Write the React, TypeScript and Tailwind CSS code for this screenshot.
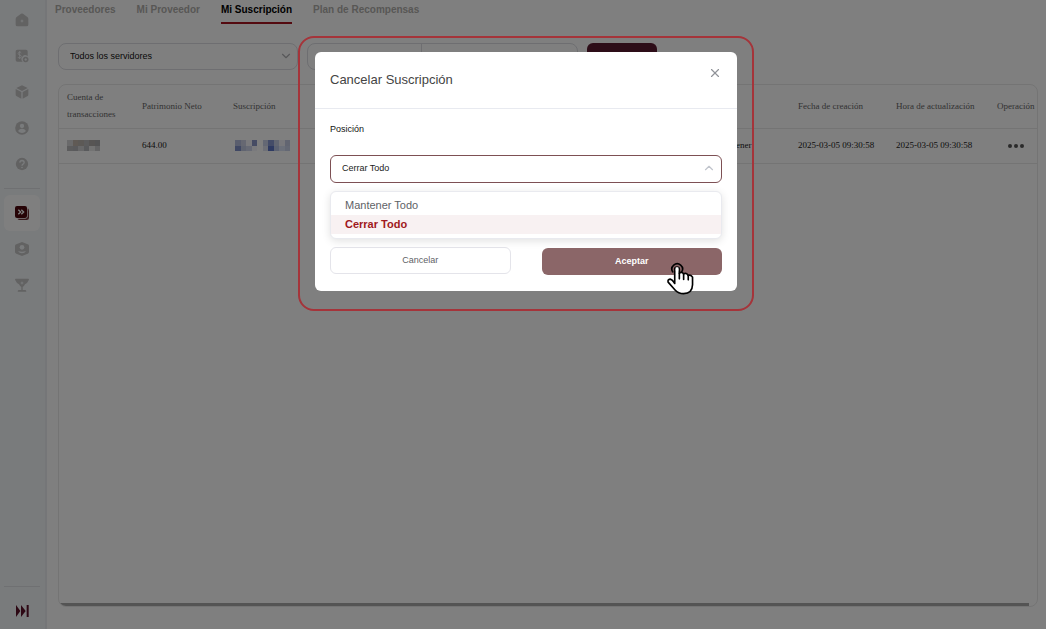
import { useState, type ReactNode } from "react";
import { X, ChevronDown, ChevronUp } from "lucide-react";

const SANS = "font-['Liberation_Sans',Arial,sans-serif]";
const SERIF = "font-['Liberation_Serif','Times_New_Roman',serif]";

function Icon({ children }: { children: ReactNode }) {
  return (
    <svg viewBox="0 0 42 42" className="size-3.5" fill="currentColor" aria-hidden="true">
      {children}
    </svg>
  );
}

const mainLinks = [
  {
    label: "Inicio",
    icon: (
      <Icon>
        <path d="M18 2.500Q21 0 24 2.500L37 12Q40 14 40 18V35Q40 40 35 40H7Q2 40 2 35V18Q2 14 5 12ZM21 18L19.500 22.500L15 24L19.500 25.500L21 30L22.500 25.500L27 24L22.500 22.500Z" fillRule="evenodd" />
      </Icon>
    ),
  },
  {
    label: "Cuentas",
    icon: (
      <Icon>
        <path d="M7 2H33Q38 2 38 7V22A10 10 0 0 0 23 38H7Q2 38 2 33V7Q2 2 7 2Z" />
        <path d="M19 12Q17 9 13.500 9.500Q9 10 9.500 14Q10 17 14 18Q19 19 19 22.500Q18.500 27 14 27Q10 27 8.500 24M14 6V30" fill="none" stroke="#f3f6f9" strokeWidth="2.500" />
        <path fillRule="evenodd" d="M32 23A8.500 8.500 0 1 1 31.900 23ZM32 28A3.500 3.500 0 1 0 32.100 28Z" />
      </Icon>
    ),
  },
  {
    label: "Productos",
    icon: (
      <Icon>
        <path d="M21 1L38 9L21 18L4 9Z" />
        <path d="M2 12L19 21V41L4 33Q2 32 2 29Z" />
        <path d="M40 12L23 21V41L38 33Q40 32 40 29Z" />
      </Icon>
    ),
  },
  {
    label: "Perfil",
    icon: (
      <Icon>
        <circle cx="21" cy="21" r="20.500" />
        <circle cx="21" cy="15" r="6.500" fill="#f3f6f9" />
        <path d="M9 30Q13 23 21 23Q29 23 33 30Q28 36 21 36Q14 36 9 30Z" fill="#f3f6f9" />
      </Icon>
    ),
  },
  {
    label: "Ayuda",
    icon: (
      <Icon>
        <circle cx="21" cy="21" r="18.500" />
        <path d="M14.500 17Q15 10.500 21 10.500Q27.500 11 27.500 16.500Q27 19.500 24 21.500Q21 23 21 26.500" fill="none" stroke="#f3f6f9" strokeWidth="4" />
        <circle cx="21" cy="31.500" r="2.500" fill="#f3f6f9" />
      </Icon>
    ),
  },
];

const tabs = ["Proveedores", "Mi Proveedor", "Mi Suscripción", "Plan de Recompensas"];
const positions = ["Mantener Todo", "Cerrar Todo"];

function Mosaic({ colors, label }: { colors: string[]; label: string }) {
  const cols = colors.length / 2;
  return (
    <svg
      role="img"
      aria-label={label}
      viewBox={`0 0 ${cols} 2`}
      height="11"
      width={cols * 5.5}
      shapeRendering="crispEdges"
      className="block"
    >
      {colors.map((c, i) => (
        <rect key={i} x={i % cols} y={Math.floor(i / cols)} width="1" height="1" fill={c} />
      ))}
    </svg>
  );
}

function Sidebar() {
  const item = "flex h-9 w-full items-center justify-center text-[#c4c4c4]";
  return (
    <nav className="flex w-[47px] shrink-0 flex-col border-r-2 border-[#ebedf0] bg-[#f3f6f9] pt-0.5 pr-px">
      {mainLinks.map((l) => (
        <a key={l.label} href="#" aria-label={l.label} className={item}>
          {l.icon}
        </a>
      ))}
      <div className="mx-1 my-1.5 h-px shrink-0 bg-[#dfe1e4]" />
      <a
        href="#"
        aria-label="Suscripciones"
        aria-current="page"
        className="mx-1 flex h-9 items-center justify-center rounded-md bg-white"
      >
        <svg viewBox="0 0 42 42" className="size-3.5" aria-hidden="true">
          <rect x="7" y="7" width="35" height="35" rx="7" fill="#6e3036" />
          <rect x="0" y="0" width="38" height="38" rx="7" fill="#fff" />
          <rect x="0" y="0" width="36" height="36" rx="6" fill="#4c060c" />
          <path d="M10 11L17 18L10 25M19 11L26 18L19 25" fill="none" stroke="#fff" strokeWidth="4" />
        </svg>
      </a>
      <a href="#" aria-label="Seguridad" className={item}>
        <Icon>
          <path d="M21 0L38 7Q42 8 42 12V30Q42 33 38 35L21 42L4 35Q0 33 0 30V12Q0 8 4 7Z" />
          <circle cx="21" cy="16" r="7" fill="#f3f6f9" />
          <path d="M9 27Q21 31 33 27Q29 34 21 34Q13 34 9 27Z" fill="#f3f6f9" />
        </Icon>
      </a>
      <a href="#" aria-label="Recompensas" className={item}>
        <Icon>
          <path fillRule="evenodd" d="M2 2H40Q43 3 41 7Q38 15 30 19Q27 25 23 27V36H31Q34 36 34 41H8Q8 36 11 36H19V27Q15 25 12 19Q4 15 1 7Q-1 3 2 2ZM21 9L19.500 13.500L15 15L19.500 16.500L21 21L22.500 16.500L27 15L22.500 13.500Z" />
        </Icon>
      </a>
      <div className="mx-1 mt-auto h-px bg-[#dfe1e4]" />
      <button type="button" aria-label="Expandir menú" className="flex h-[42px] items-center justify-center pt-1.5">
        <svg viewBox="0 0 39 36" className="h-3 w-[13px]" fill="#5a1028" aria-hidden="true">
          <path d="M0 0L13 18L0 36Z" />
          <path d="M15 0L29 18L15 36Z" />
          <rect x="32" y="0" width="6" height="36" />
        </svg>
      </button>
    </nav>
  );
}

function SubscriptionsTable() {
  const th = "whitespace-nowrap pl-2 text-left font-normal text-[#666]";
  const td = "whitespace-nowrap pl-2 text-[#222]";
  return (
    <div className="flex min-h-0 flex-1 flex-col overflow-hidden rounded-lg border border-[#e8e8e8]">
      <table className={`w-full table-fixed border-collapse text-[9px] leading-[17px] ${SERIF}`}>
        <colgroup>
          <col className="w-[75px]" />
          <col className="w-[91px]" />
          <col />
          <col className="w-[81px]" />
          <col className="w-[98px]" />
          <col className="w-[101px]" />
          <col className="w-12" />
        </colgroup>
        <thead>
          <tr className="h-[43px] border-b border-[#e8e8e8]">
            <th scope="col" className="pl-2 text-left font-normal text-[#666]">
              Cuenta de transacciones
            </th>
            <th scope="col" className={th}>Patrimonio Neto</th>
            <th scope="col" className={th}>Suscripción</th>
            <td />
            <th scope="col" className={th}>Fecha de creación</th>
            <th scope="col" className={th}>Hora de actualización</th>
            <th scope="col" className={th}>Operación</th>
          </tr>
        </thead>
        <tbody>
          <tr className="h-[35px] border-b border-[#e8e8e8]">
            <td className={td}>
              <Mosaic
                label="Cuenta oculta"
                colors={["#d4d4d6", "#c0b4aa", "#b8b2ac", "#b8b8ba", "#aeaaa8", "#a8a8aa", "#b8b8ba", "#b4b4b8", "#d0d0d2", "#b2b4b8", "#e6e6e6", "#c8c8ca"]}
              />
            </td>
            <td className={td}>644.00</td>
            <td className="pl-2.5">
              <Mosaic
                label="Suscripción oculta"
                colors={["#b4bcdc", "#ccd0e4", "#f4f4fa", "#8c98c8", "#fff", "#c8d0e8", "#8898d0", "#c4cce4", "#f0f0f8", "#c4cae2", "#8090c8", "#c0c8e0", "#ced4ea", "#f4f4fa", "#fff", "#dde0ee", "#5c74c4", "#b8c4e4", "#d8e0f4", "#c8d0e8"]}
              />
            </td>
            <td className={td}>Mantener</td>
            <td className={td}>2025-03-05 09:30:58</td>
            <td className={td}>2025-03-05 09:30:58</td>
            <td className="pl-[15px]">
              <button type="button" aria-label="Más opciones" className="flex h-4 w-6 items-center justify-center gap-0.5">
                <span className="size-1 rounded-full bg-[#555]" />
                <span className="size-1 rounded-full bg-[#555]" />
                <span className="size-1 rounded-full bg-[#555]" />
              </button>
            </td>
          </tr>
        </tbody>
      </table>
      <div className="mt-auto mr-2 ml-px h-[3px] bg-[#a8a8a8]" />
    </div>
  );
}

function PressCursor() {
  return (
    <svg
      viewBox="438 246 84 100"
      className="pointer-events-none absolute top-[15px] right-7 h-[33px] w-7"
      fill="none"
      stroke="#000"
      strokeWidth="5"
      strokeLinecap="round"
      strokeLinejoin="round"
      aria-hidden="true"
    >
      <path d="M458 276A16 16 0 1 1 485 276" />
      <path
        fill="#fff"
        d="M464 311V268Q464 261 471 261Q478 261 478 268V280Q485 274 491 282Q499 277 505 287Q513 283 518 292V315Q517 342 491 342Q475 342 465 331L444 307Q442 299 450 298Q456 299 464 311Z"
      />
      <path d="M478 280V297M491 282V299M505 287V300" />
      <path d="M467 262H475V272H467Z" fill="#fff" stroke="none" />
    </svg>
  );
}

function CancelDialog() {
  const [position, setPosition] = useState("Cerrar Todo");
  return (
    <section role="dialog" aria-modal="true" aria-labelledby="dialog-title" className="rounded-md bg-white">
      <header className="flex h-[57px] justify-between border-b border-[#e8eaf0] px-[15px]">
        <h2 id="dialog-title" className="pt-[18px] text-[13px] leading-5 text-[#444]">
          Cancelar Suscripción
        </h2>
        <button type="button" aria-label="Cerrar" className="mt-3.5 flex size-3.5 items-center justify-center text-[#909399]">
          <X className="size-3.5" strokeWidth={2} />
        </button>
      </header>
      <form className="px-[15px] pt-[13px] pb-4" onSubmit={(e) => e.preventDefault()}>
        <label htmlFor="position" className="block text-[9px] leading-[14px] text-[#111]">
          Posición
        </label>
        <div className="relative mt-[19px]">
          <select
            id="position"
            value={position}
            onChange={(e) => setPosition(e.target.value)}
            className="block h-7 w-full appearance-none rounded-md border border-[#7d5054] bg-white px-[11px] text-[9px] text-[#222] outline-none"
          >
            {positions.map((p) => (
              <option key={p}>{p}</option>
            ))}
          </select>
          <ChevronUp className="pointer-events-none absolute top-1.5 right-1.5 size-3.5 text-[#c0c4cc]" strokeWidth={2} />
          <ul
            role="listbox"
            aria-label="Posición"
            className="absolute inset-x-0 top-full mt-2 rounded-md border border-[#e9eaef] bg-white py-1 shadow-[0_2px_8px_rgba(0,0,0,0.12)]"
          >
            {positions.map((p) => (
              <li
                key={p}
                role="option"
                aria-selected={p === position}
                onClick={() => setPosition(p)}
                className={`h-[19px] cursor-pointer px-3.5 text-[11px] leading-[19px] ${
                  p === position ? "bg-[#f8f1f2] font-bold text-[#a01820]" : "text-[#606266]"
                }`}
              >
                {p}
              </li>
            ))}
          </ul>
        </div>
        <div className="mt-16 grid grid-cols-2 gap-[31px]">
          <button type="button" className="h-[27px] rounded-md border border-[#e4e4ea] bg-white text-[9px] text-[#606266]">
            Cancelar
          </button>
          <div className="relative">
            <button type="submit" className="h-[27px] w-full rounded-md bg-[#8b6668] text-[9px] font-bold text-white">
              Aceptar
            </button>
            <PressCursor />
          </div>
        </div>
      </form>
    </section>
  );
}

export default function App() {
  return (
    <div className={`flex min-h-screen bg-white ${SANS}`}>
      <Sidebar />
      <main className="flex min-w-0 flex-1 flex-col pr-2 pb-[22px] pl-[11px]">
        <nav className="-ml-[3px] flex gap-[21px] text-[10px] leading-5 font-bold text-[#b0aeab]">
          {tabs.map((t) => (
            <a
              key={t}
              href="#"
              className={
                t === "Mi Suscripción"
                  ? "h-6 border-b-2 border-[#a81420] whitespace-nowrap text-black"
                  : "h-6 whitespace-nowrap"
              }
            >
              {t}
            </a>
          ))}
        </nav>
        <div className="mt-[19px] mb-[13px] flex h-7">
          <div className="relative w-60">
            <select
              aria-label="Servidor"
              className="block h-[27px] w-full appearance-none rounded-lg border border-[#dcdde2] bg-white px-[11px] text-[9px] text-[#111]"
            >
              <option>Todos los servidores</option>
            </select>
            <ChevronDown className="pointer-events-none absolute top-1.5 right-[5px] size-3.5 text-[#b0b0b4]" strokeWidth={2} />
          </div>
          <div className="ml-[9px] flex h-[27px] w-[271px] divide-x divide-[#dcdde2] rounded-lg border border-[#dcdde2]">
            <div className="w-[114px]" />
            <div className="flex-1" />
          </div>
          <button type="button" aria-label="Buscar" className="ml-[9px] h-[27px] w-[70px] rounded-md bg-[#5a1a30]" />
        </div>
        <SubscriptionsTable />
      </main>
      <div className="fixed inset-0 flex items-start justify-center bg-black/50 pt-9 pl-[6px]">
        <div className="w-[456px] rounded-2xl border-2 border-[#a5343a] px-[15px] pt-3.5 pb-[18px]">
          <CancelDialog />
        </div>
      </div>
    </div>
  );
}
